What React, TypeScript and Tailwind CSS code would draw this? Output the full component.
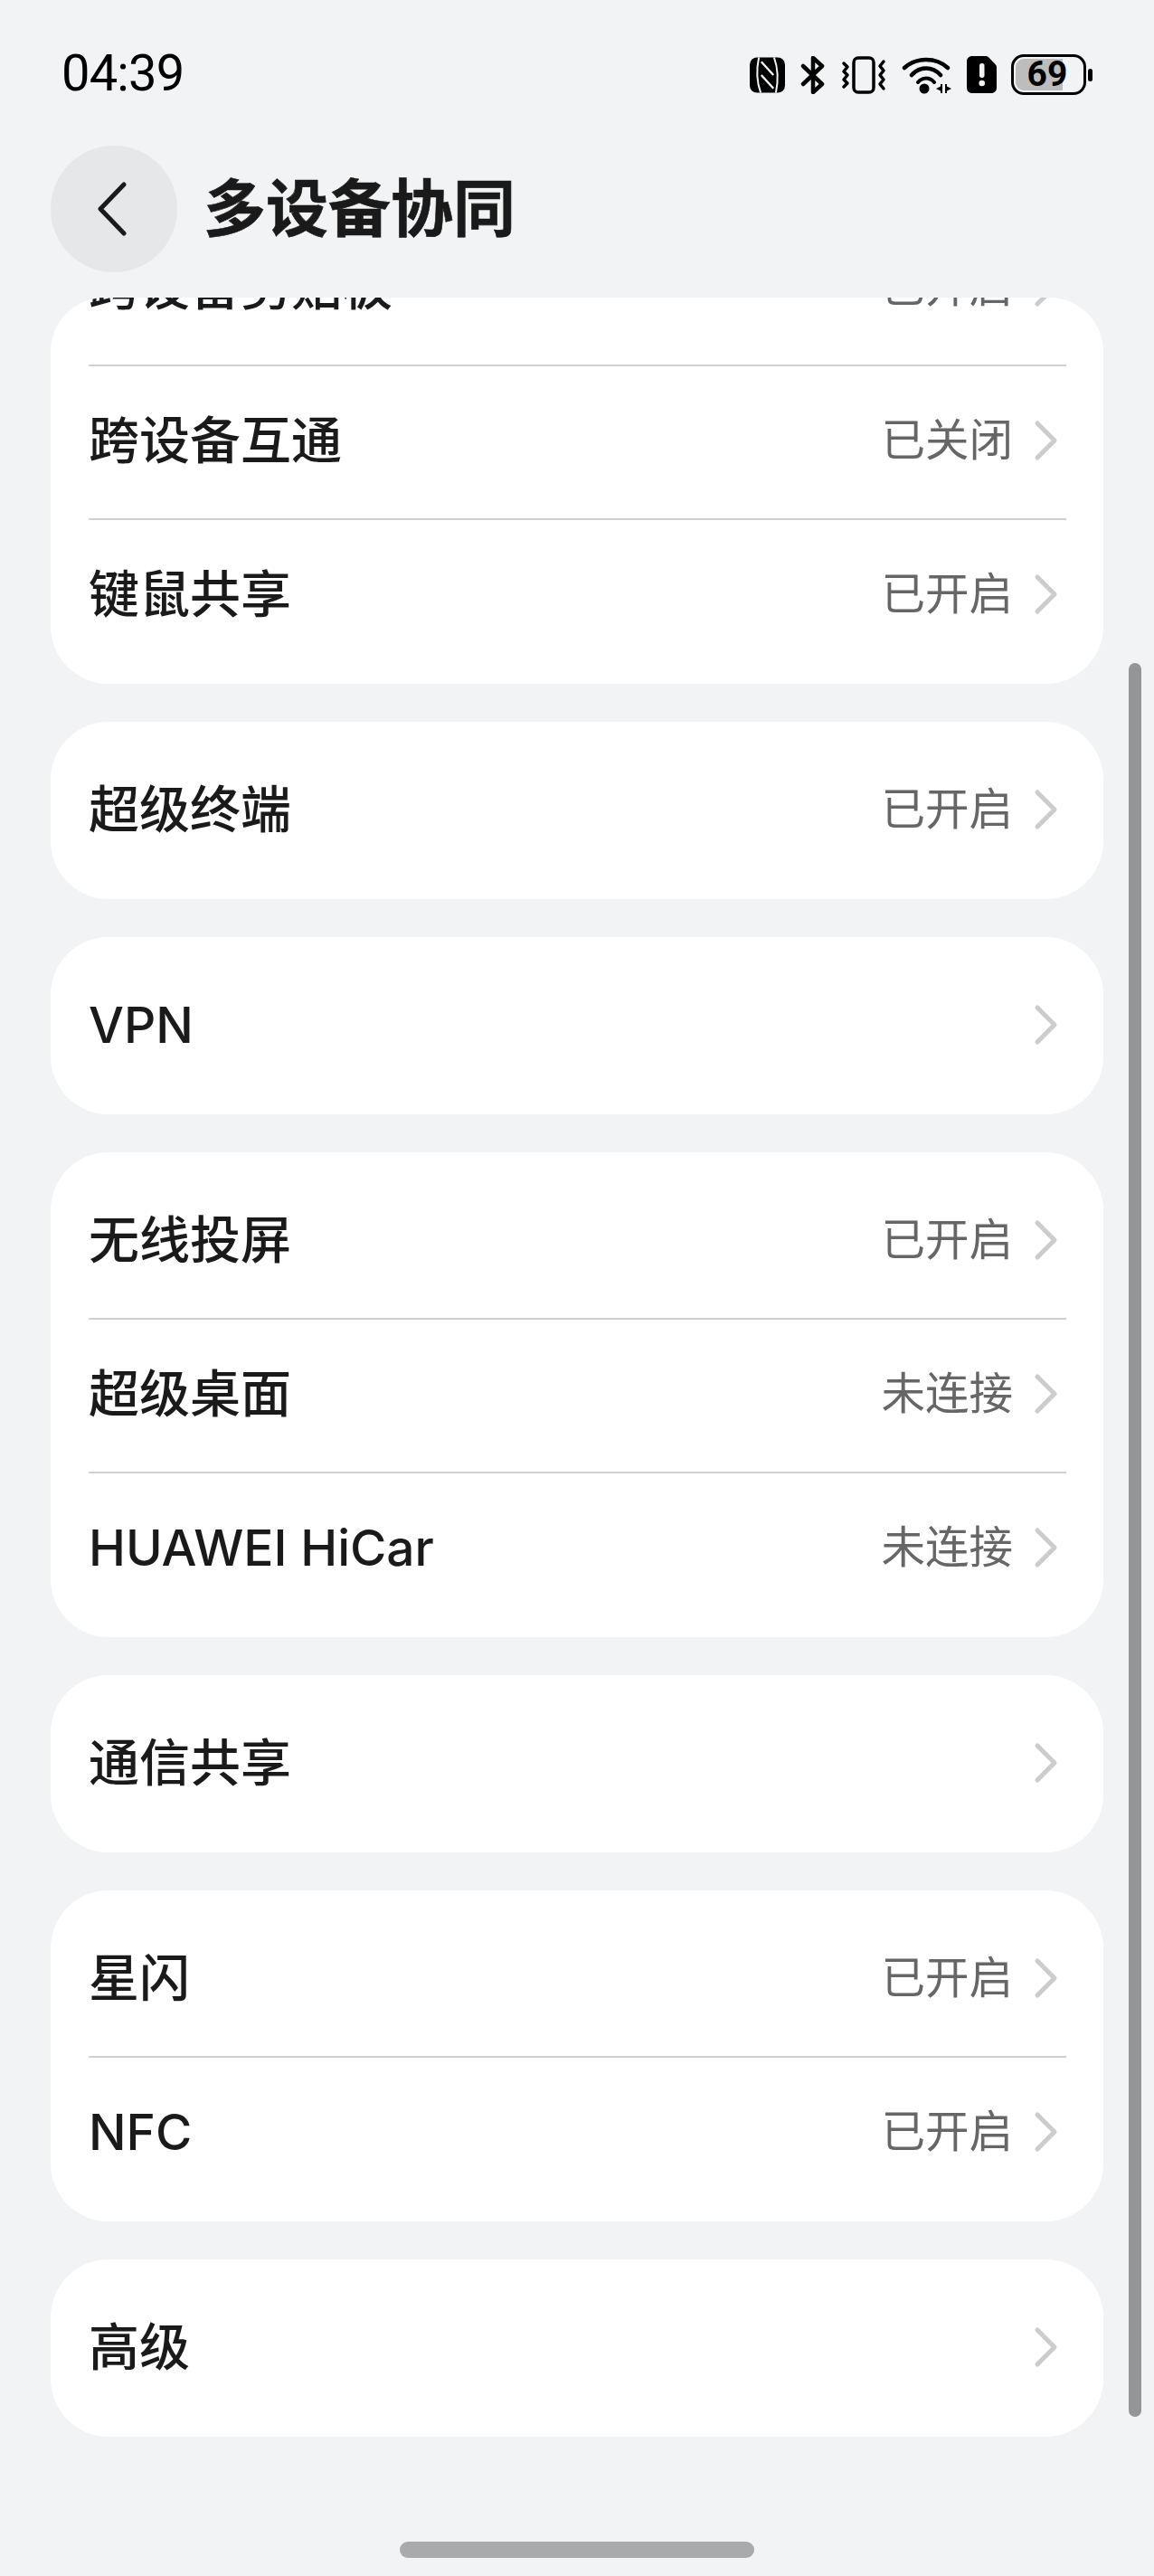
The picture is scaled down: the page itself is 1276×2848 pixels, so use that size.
import React from "react";

interface RowData {
  label: string;
  value?: string;
}

const groups: RowData[][] = [
  [
    { label: "跨设备剪贴板", value: "已开启" },
    { label: "跨设备互通", value: "已关闭" },
    { label: "键鼠共享", value: "已开启" },
  ],
  [{ label: "超级终端", value: "已开启" }],
  [{ label: "VPN" }],
  [
    { label: "无线投屏", value: "已开启" },
    { label: "超级桌面", value: "未连接" },
    { label: "HUAWEI HiCar", value: "未连接" },
  ],
  [{ label: "通信共享" }],
  [
    { label: "星闪", value: "已开启" },
    { label: "NFC", value: "已开启" },
  ],
  [{ label: "高级" }],
];

const Chevron = () => (
  <svg className="ml-[23px] h-[48px] w-[28px] shrink-0" viewBox="0 0 28 48" fill="none">
    <path d="M4 5L23 24L4 43" stroke="#cccccc" strokeWidth="5" strokeLinecap="round" strokeLinejoin="round" />
  </svg>
);

const Row: React.FC<RowData & { last: boolean }> = ({ label, value, last }) => {
  // latin labels sit a little narrower than the CJK ones
  const latin = /^[A-Z]/.test(label);
  return (
    <div className={last ? "flex h-[170px] items-center pb-[6px]" : "flex h-[170px] items-center border-b-2 border-[#d0d1d3] pb-[4px]"}>
      <span className={latin ? "flex-1 text-[55px] leading-none font-medium text-[#1a1a1a]" : "flex-1 text-[56px] leading-none font-medium text-[#1a1a1a]"}>
        {label}
      </span>
      {value && <span className="text-[48.5px] leading-none text-[#666666]">{value}</span>}
      <div className="mr-[8px] flex">
        <Chevron />
      </div>
    </div>
  );
};

const StatusIcons = () => (
  <div className="flex items-center">
    {/* NFC */}
    <svg className="h-[40px] w-[39px]" viewBox="12 12 116 116">
      <rect x="12" y="12" width="116" height="116" rx="24" fill="#000" />
      <path d="M42 12C34 50 34 90 48 128M98 128C106 90 106 50 92 12" stroke="#f1f3f5" strokeWidth="6" fill="none" />
      <path d="M50 26L90 70M50 70L90 114" stroke="#f1f3f5" strokeWidth="7" fill="none" />
    </svg>
    {/* Bluetooth */}
    <svg className="ml-[17px] h-[42px] w-[27px]" viewBox="0 0 27 42" fill="none">
      <path d="M3 11L24 31L14 40V2L24 11L3 31" stroke="#000" strokeWidth="4.5" strokeLinecap="round" strokeLinejoin="round" />
    </svg>
    {/* Vibrate */}
    <svg className="ml-[18px] h-[42px] w-[50px]" viewBox="0 0 50 42" fill="none">
      <rect x="14" y="2" width="22" height="38" rx="5" stroke="#000" strokeWidth="3.5" />
      <path d="M3 8L7 12L3 17L7 21L3 26L7 30L3 34" stroke="#000" strokeWidth="3.5" strokeLinecap="round" strokeLinejoin="round" />
      <path d="M47 6L43 11L47 16L43 21L47 26L43 31L47 36" stroke="#000" strokeWidth="3.5" strokeLinecap="round" strokeLinejoin="round" />
    </svg>
    {/* Wifi with activity arrows */}
    <svg className="ml-[17px] h-[42px] w-[55px]" viewBox="0 0 55 42" fill="none">
      <path d="M3 13C16 1 38 1 51 13" stroke="#000" strokeWidth="4.5" strokeLinecap="round" />
      <path d="M11 21C20 11 34 11 43 21" stroke="#000" strokeWidth="4.5" strokeLinecap="round" />
      <path d="M18 29C23 23 31 23 36 29" stroke="#000" strokeWidth="4" strokeLinecap="round" />
      <circle cx="25" cy="36" r="5.500" fill="#000" />
      <path d="M45 31V41H43V38.500L38 36L43 33.500V31ZM48 31V41H50V38.500L55 36L50 33.500V31Z" fill="#000" />
    </svg>
    {/* SIM alert */}
    <svg className="ml-[17px] h-[41px] w-[33px]" viewBox="0 0 33 41">
      <path d="M6 0H21C22 0 23 .4 24 1.200L31.500 9C32.500 10 33 11 33 12V35C33 38.500 30.500 41 27 41H6C2.500 41 0 38.500 0 35V6C0 2.500 2.500 0 6 0Z" fill="#000" />
      <rect x="14" y="8" width="5.500" height="16" rx="2.700" fill="#f1f3f5" />
      <circle cx="16.700" cy="30" r="3.300" fill="#f1f3f5" />
    </svg>
    {/* Battery */}
    <div className="relative ml-[16px] flex h-[45px] w-[83px] overflow-hidden rounded-[14px] border-[3px] border-black">
      <div className="m-[2px] w-[52px] rounded-l-[9px] bg-[#bdbdbd]" />
      <span className="absolute inset-0 flex items-center justify-center pr-[3px] font-['Roboto',sans-serif] text-[39px] leading-none font-bold text-black">
        69
      </span>
    </div>
    <div className="ml-[2px] h-[14px] w-[5px] rounded-full bg-black" />
  </div>
);

export default function App() {
  return (
    <div className="relative flex h-[2848px] w-[1276px] flex-col overflow-hidden bg-[#f1f3f5] font-['Inter','Noto_Sans_CJK_SC',sans-serif]">
      {/* Status bar */}
      <div className="flex h-[161px] items-start justify-between pt-[59px] pr-[68px] pl-[68px]">
        <span className="font-['Roboto',sans-serif] text-[56px] leading-[44px] tracking-[-0.8px] text-black">04:39</span>
        <div className="pt-[1px]">
          <StatusIcons />
        </div>
      </div>

      {/* Header */}
      <div className="flex h-[140px] items-center pl-[56px]">
        <div className="flex h-[140px] w-[140px] items-center justify-center rounded-full bg-[#e6e7e9]">
          <svg className="mr-[4px] h-[62px] w-[36px]" viewBox="0 0 36 62" fill="none">
            <path d="M31 4L5 31L31 58" stroke="#1a1a1a" strokeWidth="5" strokeLinecap="round" strokeLinejoin="round" />
          </svg>
        </div>
        <h1 className="ml-[29px] text-[69px] leading-none font-bold text-[#1a1a1a] [-webkit-text-stroke:0.6px_#1a1a1a]">多设备协同</h1>
      </div>

      {/* Scrolled list, clipped under the header */}
      <div className="mx-[56px] mt-[28px] h-[2365px] overflow-hidden rounded-t-[60px]">
        <div className="-mt-[109px] flex flex-col gap-[42px]">
          {groups.map((rows, i) => (
            <div key={i} className="rounded-[64px] bg-white pt-[15px] pr-[41px] pb-[11px] pl-[42px]">
              {rows.map((r, j) => (
                <Row key={r.label} {...r} last={j === rows.length - 1} />
              ))}
            </div>
          ))}
        </div>
      </div>

      {/* Home indicator */}
      <div className="mx-auto mt-[116px] h-[18px] w-[392px] rounded-full bg-[#a9aaac]" />

      {/* Scrollbar */}
      <div className="absolute top-[733px] left-[1248px] h-[1939px] w-[14px] rounded-full bg-[#949597]" />
    </div>
  );
}
